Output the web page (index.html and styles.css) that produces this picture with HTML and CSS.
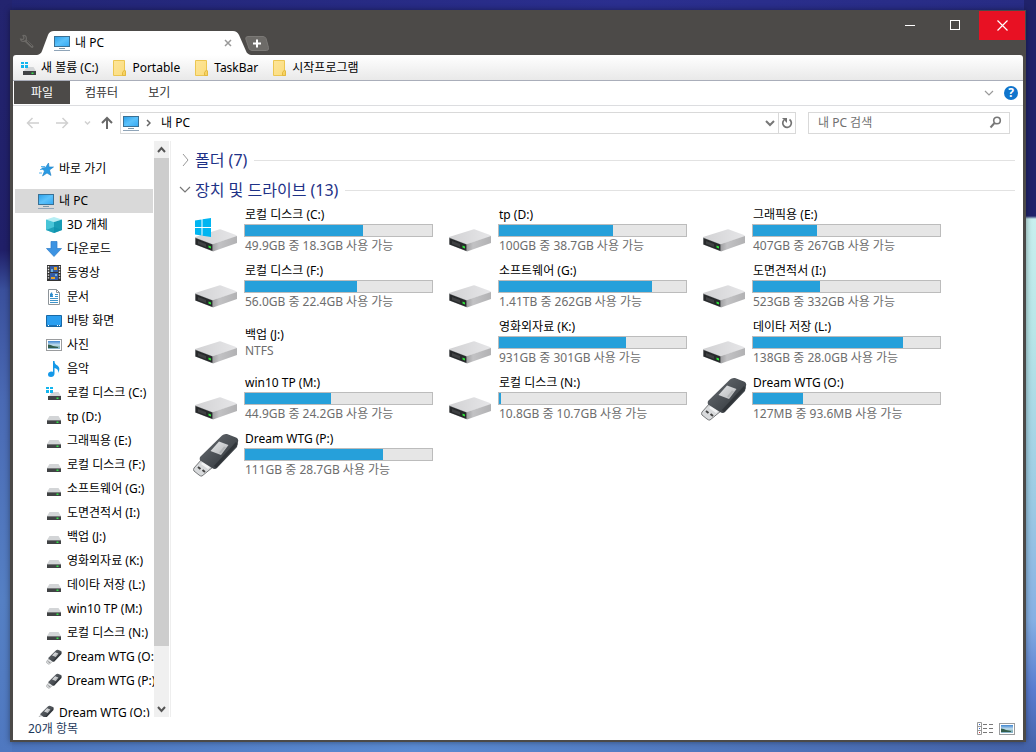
FILE: index.html
```html
<!DOCTYPE html>
<html lang="ko">
<head>
<meta charset="utf-8">
<title>내 PC</title>
<link rel="stylesheet" href="styles.css">
</head>
<body>
<svg class="defs" width="0" height="0" aria-hidden="true">
  <defs>
    <linearGradient id="screen" x1="0" y1="0" x2="1" y2="1"><stop offset="0" stop-color="#2a9fe8"/><stop offset=".5" stop-color="#5cc2fb"/><stop offset="1" stop-color="#35a9f3"/></linearGradient>
    <linearGradient id="lid" x1="0" y1="0" x2="1" y2="0"><stop offset="0" stop-color="#d2d2d4"/><stop offset="1" stop-color="#e6e6e8"/></linearGradient>
    <linearGradient id="side" x1="0" y1="0" x2="1" y2="0"><stop offset="0" stop-color="#a2a2a4"/><stop offset=".25" stop-color="#c2c2c4"/><stop offset="1" stop-color="#b2b2b4"/></linearGradient>
    <linearGradient id="folder" x1="0" y1="0" x2="1" y2="1"><stop offset="0" stop-color="#fde59a"/><stop offset="1" stop-color="#fbdc7c"/></linearGradient>
    <linearGradient id="stick" x1="0" y1="0" x2="1" y2="1"><stop offset="0" stop-color="#6b7075"/><stop offset=".6" stop-color="#454a4f"/><stop offset="1" stop-color="#2c3034"/></linearGradient>
    <linearGradient id="label" x1="0" y1="0" x2="1" y2="1"><stop offset="0" stop-color="#e4e6e8"/><stop offset="1" stop-color="#b4b6b8"/></linearGradient>
    <linearGradient id="photo" x1="0" y1="0" x2="0" y2="1"><stop offset="0" stop-color="#3f86d0"/><stop offset=".5" stop-color="#c5e0ee"/><stop offset=".75" stop-color="#7fb0b4"/><stop offset="1" stop-color="#8fb8d4"/></linearGradient>
  </defs>
  <symbol id="pc" viewBox="0 0 16 16">
    <rect x=".5" y="1.5" width="15" height="10" fill="url(#screen)" stroke="#3a7094"/>
    <path d="M5 13.5h6" stroke="#7d97a8"/><path d="M0 15.500h16" stroke="#8fa4b8"/>
  </symbol>
  <symbol id="drive" viewBox="0 0 16 16">
    <path d="M3.500 7h9L15 11H1z" fill="#d3d5d7"/><path d="M1 11h14v4H1z" fill="#414345"/><path d="M1 11.500h14" stroke="#77797b"/>
    <rect x="10.500" y="12.500" width="2" height="1.500" fill="#35e04a"/>
  </symbol>
  <symbol id="windrive" viewBox="0 0 16 16">
    <path d="M6 7h6.500L15 11H3z" fill="#d3d5d7"/><path d="M2 11h13v4H2z" fill="#414345"/><rect x="10.500" y="12.500" width="2" height="1.500" fill="#35e04a"/>
    <path d="M0 2h3v2H0zM4 2h3v2H4zM0 5h3v3H0zM4 5h3v3H4z" fill="#12b5ee"/>
  </symbol>
  <symbol id="usb" viewBox="0 0 46 46">
    <path d="M9 27 20 35 9 44Q8 44.500 6 43L1 39Q0 38 1 36z" fill="#d8dadc" stroke="#77797b"/>
    <path d="M5 35l2.500 2M9.500 38l2.500 2" stroke="#444" stroke-width="2"/><path d="M10 30l7 5-2 2-7-5z" fill="#f2f3f4"/>
    <path d="M29 3.500Q31 1.500 34 2L43 5.500Q46 7 45 10L44 15 24 36Q22 38 19 36L8 29Q6 28 7 25z" fill="url(#stick)"/>
    <path d="M44 11 22 35" stroke="#1c2024" stroke-width="3" opacity=".45"/>
    <path d="M26 9.500 35.500 13 28 23 17.500 19z" fill="url(#label)"/>
    <path d="M31 14.500l2 .7-5 6-2-.8z" fill="#a4a6a8" opacity=".6"/>
  </symbol>
  <symbol id="bigdrive" viewBox="0 0 46 46">
    <path d="M2 29 26 21.500Q27 21 28 21.500L43 27Q44 27.500 44 28.500L20 36z" fill="url(#lid)"/>
    <path d="M20 36 44 28v7L20 43.500z" fill="url(#side)"/>
    <path d="M2 29 20 36v7.500L2 36.500z" fill="#b2b4b6"/><path d="M2.500 30 19.500 36.500v6.500L2.500 36.500z" fill="#27292b"/>
    <path d="M5 33l8 3v3l-8-3z" fill="#3e4042"/><path d="M15.500 37.500l2.500 1v2l-2.500-1z" fill="#2fe63a"/>
  </symbol>
  <symbol id="winlogo" viewBox="0 0 46 46">
    <path d="M2 12.500 8.500 11.500V19H2zM9.500 11.300 18 10v9H9.500zM2 20h6.500v7.500L2 26.500zM9.500 20H18v9l-8.500-1.200z" fill="#00b5f1"/>
  </symbol>
  <symbol id="folderi" viewBox="0 0 16 16">
    <path d="M1.500.5h11v11l1 1v3h-12z" fill="url(#folder)" stroke="#ecc651"/><path d="M10.500 15.500v-3l2-2.500 1 1v4.500z" fill="#f6d263" stroke="#e3b93f"/>
  </symbol>
  <symbol id="picture" viewBox="0 0 16 16">
    <rect x=".5" y="2.500" width="15" height="11" fill="#fff" stroke="#9a9c9e"/><rect x="2" y="4" width="12" height="8" fill="url(#photo)"/><path d="M2 7.500q3 0 5 1.500l5 1v1H2z" fill="#345e4c"/>
  </symbol>
</svg>

<div class="window">
  <header class="titlebar">
    <button class="wrench" aria-label="설정"><svg width="16" height="16" viewBox="0 0 16 16"><path d="M7.500 7.500 13 12.500" stroke="#6b6966" stroke-width="3" stroke-linecap="round"/><path d="M8 7 13 12" stroke="#4c4a48"/><path d="M4 1.500A3 3 0 1 1 1.500 5L4 5.500 5 4z" fill="none" stroke="#6b6966" stroke-width="1.200"/></svg></button>
    <div class="tab">
      <svg class="tab-shape" width="214" height="24" viewBox="0 0 214 24"><path d="M0 24Q4 23 5 20L11 4Q12.500 0 17 0H196Q200 0 202 4L209 20Q210 23 214 24z" fill="#fff"/></svg>
      <svg class="i16"><use href="#pc"/></svg>
      <span class="tab-title">내 PC</span>
      <button class="tab-close" aria-label="탭 닫기"><svg width="8" height="8" viewBox="0 0 8 8"><path d="M1 1l6 6M7 1 1 7" stroke="#999" stroke-width="1.500"/></svg></button>
    </div>
    <button class="tab-add" aria-label="새 탭"><svg width="24" height="15" viewBox="0 0 24 15"><path d="M3 .5h15q2 0 3 2l2.500 9q.5 3-2 3H7q-2 0-3-2L.8 3Q.3.500 3 .5z" fill="#6d6b68" stroke="#7b7976"/><path d="M12 3.500v8M8 7.500h8" stroke="#fff" stroke-width="2"/></svg></button>
    <div class="controls">
      <button aria-label="최소화"><svg width="11" height="11"><path d="M0 5.500h10" stroke="#fff"/></svg></button>
      <button aria-label="최대화"><svg width="11" height="11"><rect x=".5" y=".5" width="9" height="9" fill="none" stroke="#fff"/></svg></button>
      <button class="close" aria-label="닫기"><svg width="11" height="11"><path d="M.5.5l10 10M10.500.5l-10 10" stroke="#fff" stroke-width="1.200"/></svg></button>
    </div>
  </header>

  <nav class="bookmarks">
    <a href="#"><svg class="i16"><use href="#windrive"/></svg>새 볼륨 (C:)</a>
    <a href="#"><svg class="i16"><use href="#folderi"/></svg>Portable</a>
    <a href="#"><svg class="i16"><use href="#folderi"/></svg>TaskBar</a>
    <a href="#"><svg class="i16"><use href="#folderi"/></svg>시작프로그램</a>
  </nav>

  <div class="ribbon">
    <button class="file">파일</button><button>컴퓨터</button><button>보기</button>
    <div class="ribbon-end">
      <button class="plain" aria-label="리본 확장"><svg width="10" height="10" viewBox="0 0 10 10"><path d="M1 3l4 4 4-4" fill="none" stroke="#9a9a9a" stroke-width="1.200"/></svg></button>
      <button class="help" aria-label="도움말">?</button>
    </div>
  </div>

  <div class="address-row">
    <div class="arrows">
      <button aria-label="뒤로"><svg width="14" height="14" viewBox="0 0 14 14"><path d="M13 7H1.500M6.500 2l-5 5 5 5" fill="none" stroke="#d0d0d0" stroke-width="1.500"/></svg></button>
      <button aria-label="앞으로"><svg width="14" height="14" viewBox="0 0 14 14"><path d="M1 7h11.500M7.500 2l5 5-5 5" fill="none" stroke="#d0d0d0" stroke-width="1.500"/></svg></button>
      <button aria-label="최근 위치"><svg width="7" height="14" viewBox="0 0 7 14"><path d="M1 5.500 3.500 8 6 5.500" fill="none" stroke="#d0d0d0" stroke-width="1.500"/></svg></button>
      <button aria-label="위로"><svg width="14" height="14" viewBox="0 0 14 14"><path d="M7 13V2M2 7l5-5 5 5" fill="none" stroke="#686868" stroke-width="2"/></svg></button>
    </div>
    <div class="path">
      <svg class="i16"><use href="#pc"/></svg>
      <svg width="5" height="8" viewBox="0 0 5 8"><path d="M1 1l3 3-3 3" fill="none" stroke="#666" stroke-width="1.500"/></svg>
      <span class="crumb">내 PC</span>
      <button class="drop" aria-label="이전 위치"><svg width="10" height="8" viewBox="0 0 10 8"><path d="M1 2l4 4 4-4" fill="none" stroke="#777" stroke-width="2"/></svg></button>
      <button class="refresh" aria-label="새로 고침"><svg width="12" height="12" viewBox="0 0 12 12"><path d="M8.500 2.500A4.300 4.300 0 1 1 3 3" fill="none" stroke="#737373" stroke-width="1.700"/><path d="M1 1h5v5z" fill="#737373"/></svg></button>
    </div>
    <label class="search">
      <input type="text" placeholder="내 PC 검색" aria-label="내 PC 검색">
      <svg width="13" height="13" viewBox="0 0 13 13"><circle cx="8" cy="4.500" r="3.300" fill="none" stroke="#777" stroke-width="1.600"/><path d="M5.500 7 1.500 11.500" stroke="#777" stroke-width="2"/></svg>
    </label>
  </div>

  <div class="main">
    <aside class="sidebar">
      <nav class="tree">
        <a class="root" href="#"><svg class="i16" viewBox="0 0 16 16"><path d="M10.500 2l.5 4 4.500 0-4 3 1.500 5.500L9 12l-4.500 3 2-5L3.500 7l4-.5z" fill="#2a9be4" stroke="#1c80c4" stroke-width=".6"/><path d="M3 5.500h4M2 8.500h3M1 12h3" stroke="#5ab6ee"/></svg>바로 가기</a>
        <a class="root current" href="#"><svg class="i16"><use href="#pc"/></svg>내 PC</a>
        <a href="#"><svg class="i16" viewBox="0 0 16 16"><path d="M8 0l8 2.500L8 5 0 2.500z" fill="#b5eef4"/><path d="M0 2.500 8 5v11l-8-3z" fill="#48c5d8"/><path d="M16 2.500 8 5v11l8-3z" fill="#189cb5"/><path d="M0 13l8-3 8 3-8 3z" fill="#0d91ad" opacity=".7"/></svg>3D 개체</a>
        <a href="#"><svg class="i16" viewBox="0 0 16 16"><path d="M5 0.500h6v7h4.500L8 15.500.5 7.500H5z" fill="#3c93e2" stroke="#2b7bca" stroke-width=".7"/></svg>다운로드</a>
        <a href="#"><svg class="i16" viewBox="0 0 16 16"><path d="M1 0h14v16H1z" fill="#333"/><path d="M2.500 1v14M13.500 1v14" stroke="#eee" stroke-width="1.400" stroke-dasharray="1.400 1.400"/><path d="M4 1h8v6H4zM4 8h8v7H4z" fill="#355ca5"/><path d="M8 2h3v3H8zM5 12h4v2H5z" fill="#e2a32c"/><path d="M5 4h2v3H5zM9 9h2v2H9z" fill="#6fb2dc"/></svg>동영상</a>
        <a href="#"><svg class="i16" viewBox="0 0 16 16"><path d="M2.500.5h8l3 3v12h-11z" fill="#fff" stroke="#8d9499"/><path d="M10.500.5v3h3" fill="none" stroke="#8d9499"/><path d="M4 5.500h3M9 5.500h3M4 7.500h3M9 7.500h3M4 9.500h8M4 11.500h8M4 13.500h8" stroke="#3f94c9"/><path d="M4 5l2-2 1 5H4z" fill="#2e8ccc"/></svg>문서</a>
        <a href="#"><svg class="i16" viewBox="0 0 16 16"><path d="M.5 2.500h15v11H.5z" fill="#2b9ff0" stroke="#1869a6"/><path d="M1 12.500h14" stroke="#1b73b8"/><path d="M2 12.500h2M11 12.500h3" stroke="#fff" stroke-dasharray="1 1"/></svg>바탕 화면</a>
        <a href="#"><svg class="i16"><use href="#picture"/></svg>사진</a>
        <a href="#"><svg class="i16" viewBox="0 0 16 16"><path d="M7 0h1.500q0 3 3 4.500Q15 7 12 12q1-4-3.500-5v6Q8 16 5 16T2 13.500 5 10.500l2 .2z" fill="#1498e8"/></svg>음악</a>
        <a href="#"><svg class="i16"><use href="#windrive"/></svg>로컬 디스크 (C:)</a>
        <a href="#"><svg class="i16"><use href="#drive"/></svg>tp (D:)</a>
        <a href="#"><svg class="i16"><use href="#drive"/></svg>그래픽용 (E:)</a>
        <a href="#"><svg class="i16"><use href="#drive"/></svg>로컬 디스크 (F:)</a>
        <a href="#"><svg class="i16"><use href="#drive"/></svg>소프트웨어 (G:)</a>
        <a href="#"><svg class="i16"><use href="#drive"/></svg>도면견적서 (I:)</a>
        <a href="#"><svg class="i16"><use href="#drive"/></svg>백업 (J:)</a>
        <a href="#"><svg class="i16"><use href="#drive"/></svg>영화외자료 (K:)</a>
        <a href="#"><svg class="i16"><use href="#drive"/></svg>데이타 저장 (L:)</a>
        <a href="#"><svg class="i16"><use href="#drive"/></svg>win10 TP (M:)</a>
        <a href="#"><svg class="i16"><use href="#drive"/></svg>로컬 디스크 (N:)</a>
        <a href="#"><svg class="i16"><use href="#usb"/></svg>Dream WTG (O:)</a>
        <a href="#"><svg class="i16"><use href="#usb"/></svg>Dream WTG (P:)</a>
        <a class="root" href="#"><svg class="i16"><use href="#usb"/></svg>Dream WTG (O:)</a>
      </nav>
      <div class="scrollbar">
        <button aria-label="위로 스크롤"><svg width="9" height="8" viewBox="0 0 9 8"><path d="M1 6l3.500-4L8 6" fill="none" stroke="#555" stroke-width="2"/></svg></button>
        <div class="thumb"></div><div class="track"></div>
        <button aria-label="아래로 스크롤"><svg width="9" height="8" viewBox="0 0 9 8"><path d="M1 2l3.500 4L8 2" fill="none" stroke="#555" stroke-width="2"/></svg></button>
      </div>
    </aside>

    <main class="content">
      <h2><svg width="12" height="12" viewBox="0 0 12 12"><path d="M4 0l5 6-5 6" fill="none" stroke="#999"/></svg>폴더 (7)</h2>
      <h2><svg width="12" height="12" viewBox="0 0 12 12"><path d="M1 3l5 5 5-5" fill="none" stroke="#777" stroke-width="1.200"/></svg>장치 및 드라이브 (13)</h2>
      <div class="drives">
        <div class="drive"><svg class="i46"><use href="#bigdrive"/><use href="#winlogo"/></svg><div class="info"><div class="name">로컬 디스크 (C:)</div><div class="bar"><div class="fill" style="width:63%"></div></div><div class="free">49.9GB 중 18.3GB 사용 가능</div></div></div>
        <div class="drive"><svg class="i46"><use href="#bigdrive"/></svg><div class="info"><div class="name">tp (D:)</div><div class="bar"><div class="fill" style="width:61%"></div></div><div class="free">100GB 중 38.7GB 사용 가능</div></div></div>
        <div class="drive"><svg class="i46"><use href="#bigdrive"/></svg><div class="info"><div class="name">그래픽용 (E:)</div><div class="bar"><div class="fill" style="width:34%"></div></div><div class="free">407GB 중 267GB 사용 가능</div></div></div>
        <div class="drive"><svg class="i46"><use href="#bigdrive"/></svg><div class="info"><div class="name">로컬 디스크 (F:)</div><div class="bar"><div class="fill" style="width:60%"></div></div><div class="free">56.0GB 중 22.4GB 사용 가능</div></div></div>
        <div class="drive"><svg class="i46"><use href="#bigdrive"/></svg><div class="info"><div class="name">소프트웨어 (G:)</div><div class="bar"><div class="fill" style="width:82%"></div></div><div class="free">1.41TB 중 262GB 사용 가능</div></div></div>
        <div class="drive"><svg class="i46"><use href="#bigdrive"/></svg><div class="info"><div class="name">도면견적서 (I:)</div><div class="bar"><div class="fill" style="width:36%"></div></div><div class="free">523GB 중 332GB 사용 가능</div></div></div>
        <div class="drive"><svg class="i46"><use href="#bigdrive"/></svg><div class="info"><div class="name">백업 (J:)</div><div class="free">NTFS</div></div></div>
        <div class="drive"><svg class="i46"><use href="#bigdrive"/></svg><div class="info"><div class="name">영화외자료 (K:)</div><div class="bar"><div class="fill" style="width:68%"></div></div><div class="free">931GB 중 301GB 사용 가능</div></div></div>
        <div class="drive"><svg class="i46"><use href="#bigdrive"/></svg><div class="info"><div class="name">데이타 저장 (L:)</div><div class="bar"><div class="fill" style="width:80%"></div></div><div class="free">138GB 중 28.0GB 사용 가능</div></div></div>
        <div class="drive"><svg class="i46"><use href="#bigdrive"/></svg><div class="info"><div class="name">win10 TP (M:)</div><div class="bar"><div class="fill" style="width:46%"></div></div><div class="free">44.9GB 중 24.2GB 사용 가능</div></div></div>
        <div class="drive"><svg class="i46"><use href="#bigdrive"/></svg><div class="info"><div class="name">로컬 디스크 (N:)</div><div class="bar"><div class="fill" style="width:1%"></div></div><div class="free">10.8GB 중 10.7GB 사용 가능</div></div></div>
        <div class="drive"><svg class="i46"><use href="#usb"/></svg><div class="info"><div class="name">Dream WTG (O:)</div><div class="bar"><div class="fill" style="width:27%"></div></div><div class="free">127MB 중 93.6MB 사용 가능</div></div></div>
        <div class="drive"><svg class="i46"><use href="#usb"/></svg><div class="info"><div class="name">Dream WTG (P:)</div><div class="bar"><div class="fill" style="width:74%"></div></div><div class="free">111GB 중 28.7GB 사용 가능</div></div></div>
      </div>
    </main>
  </div>

  <footer class="status">
    <span>20개 항목</span>
    <div class="views">
      <button aria-label="자세히"><svg width="16" height="14" viewBox="0 0 16 14"><path d="M.5.5h4v12h-4zM.5 4.500h4M.5 8.500h4" fill="none" stroke="#999"/><path d="M6 2.500h4M12 2.500h4M6 6.500h4M12 6.500h4M6 10.500h4M12 10.500h4" stroke="#777"/><path d="M2 10.500h1" stroke="#c33"/><path d="M2 2.500h1M2 6.500h1" stroke="#36c"/></svg></button>
      <button aria-label="큰 아이콘"><svg class="i16"><use href="#picture"/></svg></button>
    </div>
  </footer>
</div>
</body>
</html>
```
FILE: styles.css
```css
* { box-sizing: border-box; }
html, body { height: 100%; }
body {
  margin: 0;
  padding: 10px;
  overflow: hidden;
  font: 12px/16px "Noto Sans", "Noto Sans CJK KR", sans-serif;
  color: #000;
  background:
    linear-gradient(#20226a 0 216px, #c8efee 219px, #b8e6e8 330px, #9ccbe4 500px, #86b0e4 620px, #5a7cd0 690px, #4462a8) right / 12px 100% no-repeat,
    linear-gradient(#23246f, #201f68 250px, #3a509c 290px, #4a6ab4 400px, #5580c4 600px, #4f78c0) left / 12px 100% no-repeat,
    linear-gradient(90deg, #4c74bc, #5a8ad2 40%, #4462a8) bottom / 100% 12px no-repeat,
    linear-gradient(90deg, #222574, #2b2f8f 60%, #282c84);
}
.defs { position: absolute; }
button {
  display: flex; align-items: center; justify-content: center;
  margin: 0; padding: 0; border: 0;
  background: none; color: inherit; font: inherit;
}
a { color: inherit; text-decoration: none; white-space: nowrap; }
svg { flex: none; display: block; }
.i16 { width: 16px; height: 16px; }
.i46 { width: 46px; height: 46px; }

.window {
  display: flex; flex-direction: column;
  height: 100%;
  padding: 0 3px 2px;
  background: #4c4a48;
  box-shadow: 0 0 6px #0006;
}
.titlebar { display: flex; align-items: flex-end; height: 45px; flex: none; }
.wrench { width: 24px; height: 21px; align-items: flex-start; padding-left: 4px; }
.tab {
  position: relative;
  display: flex; align-items: center; gap: 5px;
  width: 211px; height: 24px;
  padding: 0 16px 0 17px;
}
.tab-shape { position: absolute; inset: 0 auto auto 0; }
.tab > .i16, .tab-title, .tab-close { position: relative; }
.tab-close { width: 8px; height: 16px; margin-left: auto; }
.tab-add { margin-bottom: 4px; margin-left: -3px; }
.controls { display: flex; align-self: flex-start; margin: 1px -2px 0 auto; }
.controls button { width: 45px; height: 29px; }
.controls .close { margin-left: 1px; width: 46px; background: #e81123; }

.bookmarks {
  display: flex; align-items: center; gap: 14px;
  height: 26px; flex: none;
  padding: 0 8px;
  background: linear-gradient(#fff, #e9e9e9);
  border-bottom: 1px solid #aaaeba;
  border-radius: 3px 3px 0 0;
}
.bookmarks a { display: flex; align-items: center; gap: 4px; }

.ribbon {
  display: flex; height: 25px; flex: none;
  padding: 0 5px 0 1px;
  background: #fff;
  border-bottom: 1px solid #dcdde0;
  color: #333;
}
.ribbon > button { padding: 0 15px; }
.ribbon > .file { width: 56px; margin-bottom: 1px; background: #4c4a48; color: #fff; }
.ribbon-end { display: flex; align-items: center; gap: 10px; margin-left: auto; }
.help {
  width: 14px; height: 14px;
  border-radius: 50%;
  background: #0f74cc; color: #fff; font-weight: 700;
}

.address-row {
  display: flex; align-items: center;
  height: 35px; flex: none;
  padding: 0 13px 2px;
  background: #fff;
}
.arrows { display: flex; align-items: center; gap: 15px; width: 94px; }
.arrows button:last-child { margin-left: -6px; }
.path {
  display: flex; align-items: center;
  flex: 1; height: 22px;
  padding-left: 2px;
  border: 1px solid #d9d9d9;
}
.path > svg + svg { margin-left: 7px; }
.crumb { flex: 1; padding-left: 10px; }
.drop { width: 16px; }
.refresh { align-self: stretch; width: 17px; border-left: 1px solid #d9d9d9; }
.search {
  display: flex; align-items: center;
  width: 202px; height: 22px;
  margin-left: 12px; padding: 0 7px 0 9px;
  border: 1px solid #d9d9d9;
}
.search input {
  flex: 1; min-width: 0; padding: 0;
  border: 0; outline: 0; background: none; font: inherit;
}
.search input::placeholder { color: #707070; opacity: 1; }

.main { display: flex; flex: 1; min-height: 0; background: #fff; }
.sidebar { display: flex; width: 158px; flex: none; border-right: 1px solid #eee; }
.tree { flex: 1; min-width: 0; padding: 16px 0 0 2px; overflow: hidden; }
.tree a {
  display: flex; align-items: center; gap: 5px;
  height: 24px; padding-left: 31px;
}
.tree .root { padding-left: 23px; }
.tree .current { margin-top: 8px; margin-right: 1px; background: #d9d9d9; }
.tree a:last-child { margin-top: 8px; }
.scrollbar { display: flex; flex-direction: column; width: 15px; margin-right: 1px; background: #f0f0f0; }
.scrollbar button { height: 17px; }
.thumb { flex: 9; background: #cdcdcd; }
.track { flex: 1; }

.content { flex: 1; min-width: 0; padding: 4px 8px 0; overflow: hidden; }
h2 {
  display: flex; align-items: center; gap: 4px;
  height: 30px; margin: 0;
  color: #1e3287;
  font-size: 16px; font-weight: 400; line-height: 20px;
}
h2::after { content: ""; flex: 1; height: 1px; margin-left: 3px; background: #e2e2e2; }
.drives { display: grid; grid-template-columns: repeat(auto-fill, 254px); padding-left: 14px; }
.drive { display: flex; align-items: flex-end; gap: 5px; padding: 2px 0 7px; }
.info { display: flex; flex-direction: column; justify-content: center; width: 189px; height: 47px; }
.name, .free { padding-left: 1px; white-space: nowrap; }
.free { color: #6d6d6d; }
.bar { height: 13px; margin: 1px 0; border: 1px solid #bcbcbc; background: #e6e6e6; }
.fill { height: 100%; background: #26a0da; }

.status {
  display: flex; align-items: center; justify-content: space-between;
  height: 23px; flex: none;
  padding: 0 8px 0 15px;
  background: #fff; color: #1e395b;
}
.views { display: flex; gap: 6px; }
```
